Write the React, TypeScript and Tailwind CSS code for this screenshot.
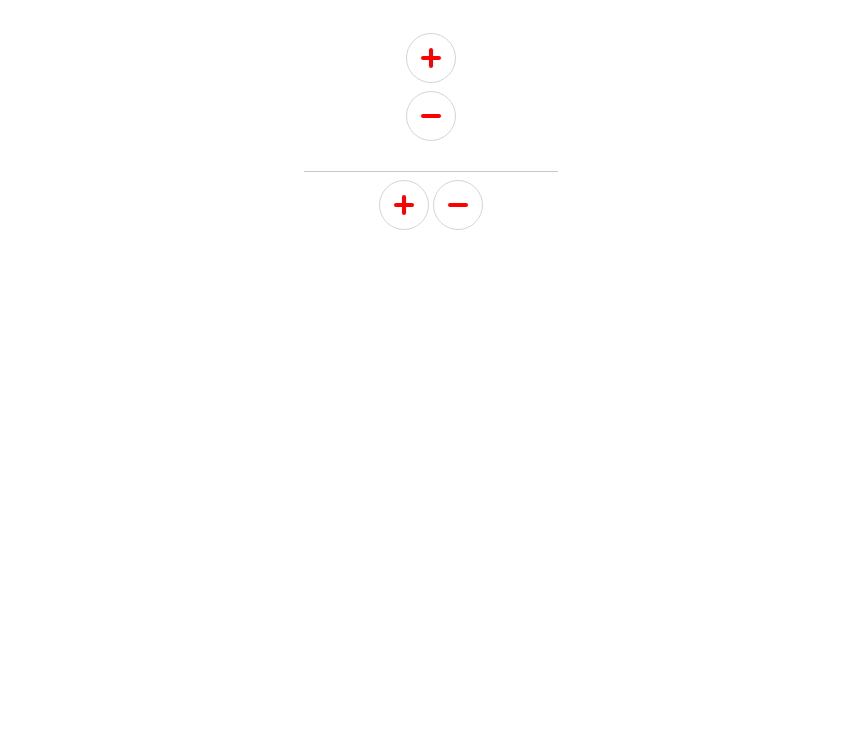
import React from 'react';

const Plus = () => (
  <svg width="22" height="22" viewBox="0 0 22 22" fill="none" stroke="#ff0000" strokeWidth="4" strokeLinecap="round">
    <path d="M3 11h16M11 3v16" />
  </svg>
);

const Minus = () => (
  <svg width="22" height="22" viewBox="0 0 22 22" fill="none" stroke="#ff0000" strokeWidth="4" strokeLinecap="round">
    <path d="M3 11h16" />
  </svg>
);

const RoundButton = ({ children }: { children: React.ReactNode }) => (
  <button className="w-[50px] h-[50px] rounded-full border border-[#d4d4d4] bg-white flex items-center justify-center">
    {children}
  </button>
);

export default function App() {
  return (
    <div className="min-h-screen bg-white pt-[33px]">
      <div className="w-[254px] ml-[304px] flex flex-col items-center">
        {/* stacked */}
        <div className="flex flex-col items-center gap-[8px]">
          <RoundButton><Plus /></RoundButton>
          <RoundButton><Minus /></RoundButton>
        </div>

        <div className="w-full h-px bg-[#c8c8c8] mt-[30px]" />

        {/* inline */}
        <div className="flex items-center gap-[4px] mt-[8px]">
          <RoundButton><Plus /></RoundButton>
          <RoundButton><Minus /></RoundButton>
        </div>
      </div>
    </div>
  );
}
